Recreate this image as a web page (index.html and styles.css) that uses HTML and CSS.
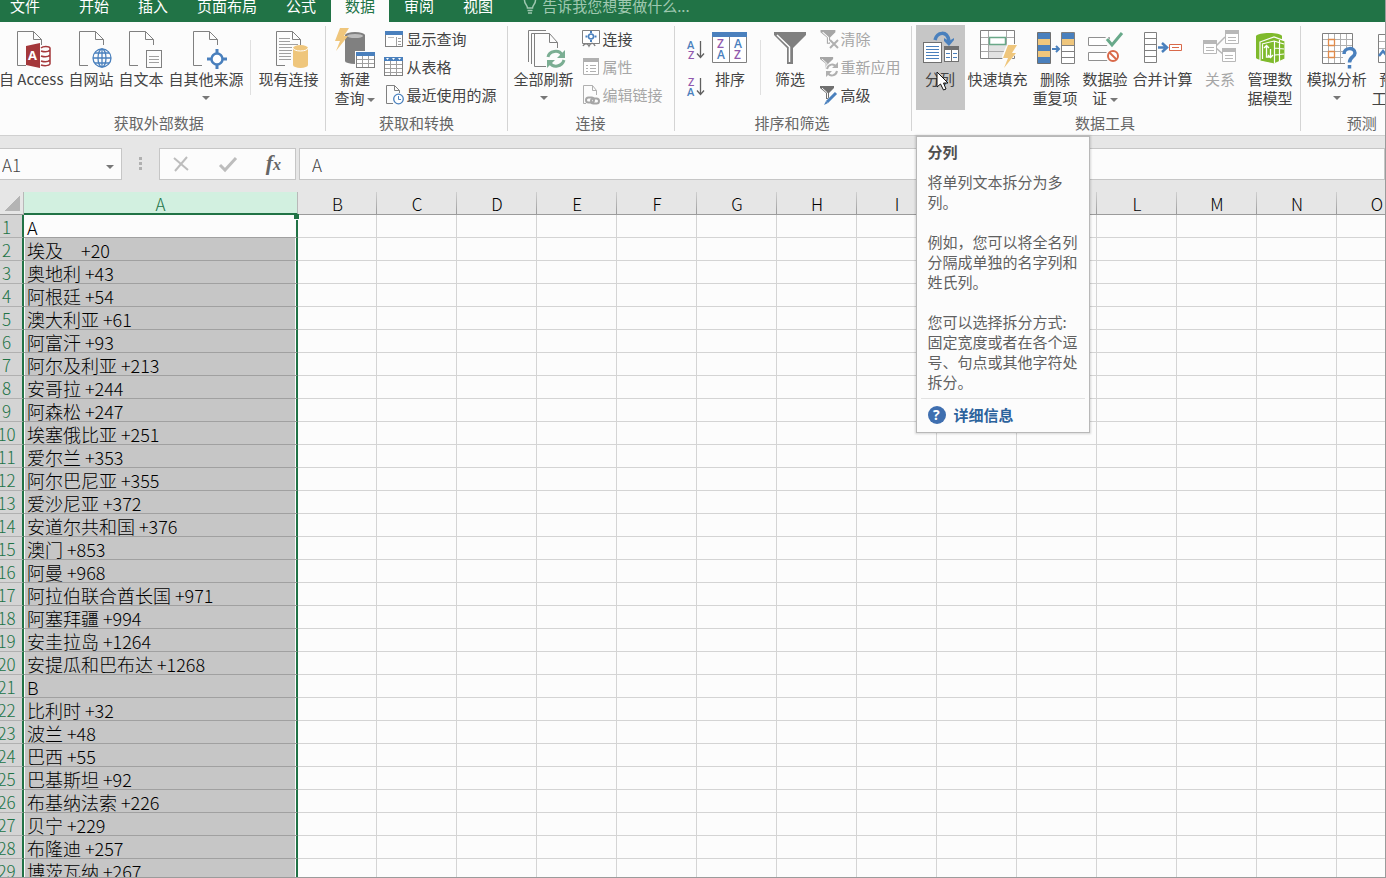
FILE: index.html
```html
<!DOCTYPE html>
<html lang="zh-CN">
<head>
    <meta charset="UTF-8">
    <meta name="viewport" content="width=device-width, initial-scale=1.0">
    <title>Excel - 分列</title>
    <link rel="stylesheet" href="styles.css">
</head>
<body>
    <!-- Shared icon parts -->
    <svg class="defs" aria-hidden="true">
        <symbol id="page" viewBox="0 0 27 36" overflow="visible">
            <path d="M9 34.5H.5V.5H16.5L24.5 8.5V14M16.5 .5V8.5H24.5" fill="none" stroke="#808080"/>
        </symbol>
        <symbol id="bolt" viewBox="0 0 14 23" overflow="visible">
            <path d="M5 0H14L9 8H13L1 23L5 13H0Z" fill="#efc67c"/>
        </symbol>
        <symbol id="funnel" viewBox="0 0 16 16" overflow="visible">
            <path d="M0 0H14V2L9 7V13H6V7L0 2Z" fill="currentColor"/>
            <path d="M2 2L7.5 7V12" fill="none" stroke="#fcfcfc"/>
        </symbol>
    </svg>

    <div class="app">
        <nav class="tabs">
            <button class="tab file">文件</button>
            <button class="tab">开始</button>
            <button class="tab">插入</button>
            <button class="tab">页面布局</button>
            <button class="tab">公式</button>
            <button class="tab active">数据</button>
            <button class="tab">审阅</button>
            <button class="tab">视图</button>
            <label class="tell-me">
                <svg width="14" height="20" viewBox="0 0 14 20" fill="none" stroke="#9fc8b0" stroke-width="1.5"><path d="M4.5 13C4.5 10 1.5 9 1.5 5.500A5.500 5.500 0 0 1 12.500 5.500C12.500 9 9.500 10 9.500 13ZM4.500 15.500H9.500M5 18H9"/></svg>
                <input type="text" placeholder="告诉我您想要做什么...">
            </label>
        </nav>

        <div class="ribbon">
            <section class="group external">
                <div class="tools">
                    <button class="big">
                        <svg width="40" height="41" viewBox="3 0 40 41"><use href="#page" x="9" y="3" width="27" height="36"/>
                            <path d="M18 18L32 15V40L18 37Z" fill="#a4373a"/>
                            <text x="20" y="32" class="glyph" font-size="13" font-weight="700" fill="#fff">A</text>
                            <path d="M33 20C35 18 41 18 42 20V36C41 38 36 38 33 37M33 23C36 24 40 24 42 22M33 28C36 29 40 29 42 27M33 33C36 34 40 34 42 32" fill="none" stroke="#a4373a" stroke-width="1.500"/></svg>
                        <span>自 Access</span>
                    </button>
                    <button class="big">
                        <svg width="40" height="41"><use href="#page" x="8" y="3" width="27" height="36"/>
                            <g fill="#fcfcfc" stroke="#4a80bd" stroke-width="1.300"><circle cx="31" cy="30" r="9"/><ellipse cx="31" cy="30" rx="4" ry="9"/><path d="M31 21V39M22 30H40M24 25H38M24 35H38"/></g></svg>
                        <span>自网站</span>
                    </button>
                    <button class="big">
                        <svg width="40" height="41"><use href="#page" x="8" y="3" width="27" height="36"/>
                            <rect x="25.500" y="22.500" width="15" height="17" fill="#fcfcfc" stroke="#808080"/><path d="M28 28.500H38M28 31.500H38M28 34.500H38" stroke="#a0a0a0"/></svg>
                        <span>自文本</span>
                    </button>
                    <button class="big">
                        <svg width="40" height="41"><use href="#page" x="7" y="3" width="27" height="36"/>
                            <circle cx="31" cy="31" r="9" fill="#fcfcfc"/><circle cx="31" cy="31" r="5.500" fill="#fff" stroke="#4a80bd" stroke-width="2.500"/><path d="M31 21V26M31 36V41M21 31H26M36 31H41" stroke="#4a80bd" stroke-width="3"/></svg>
                        <span>自其他来源</span>
                        <span class="arrow"></span>
                    </button>
                    <i class="divider"></i>
                    <button class="big">
                        <svg width="40" height="41"><use href="#page" x="8" y="3" width="27" height="36"/>
                            <path d="M11 10.500H22M11 13.500H22M11 16.500H30M11 19.500H24M11 22.500H24M11 25.500H23M11 28.500H23M11 31.500H23" stroke="#a0a0a0"/>
                            <path d="M25 20V37A7.500 3 0 0 0 40 37V20A7.500 3 0 0 0 25 20Z" fill="#efc67c"/><path d="M25 20A7.500 3 0 0 0 40 20" fill="none" stroke="#fff"/></svg>
                        <span>现有连接</span>
                    </button>
                </div>
                <h2>获取外部数据</h2>
            </section>
            <i class="separator"></i>

            <section class="group transform">
                <div class="tools">
                    <button class="big">
                        <svg width="40" height="41"><path d="M10 7V33A10 3 0 0 0 30 33V7A10 3 0 0 0 10 7Z" fill="#808080"/><ellipse cx="20" cy="8" rx="8" ry="2" fill="#bdbdbd"/><use href="#bolt" x="0" y="0" width="14" height="23"/>
                            <rect x="20" y="23" width="20" height="18" fill="#fcfcfc"/><rect x="21.500" y="24.500" width="18" height="15" fill="#fff" stroke="#808080"/><path d="M22 31.500H39M22 35.500H39M27.500 28V39M33.500 28V39" stroke="#a0a0a0"/><path d="M21 24H40V28H21Z" fill="#4a80bd"/></svg>
                        <span>新建</span>
                        <span>查询<b class="arrow"></b></span>
                    </button>
                    <div class="stack">
                        <button class="small">
                            <svg width="20" height="20"><rect x="1.500" y="2.500" width="17" height="15" fill="#fff" stroke="#808080"/><path d="M1 2H19V6H1Z" fill="#4a80bd"/><path d="M12.500 8V17M14 9.500H17M14 12.500H17M14 15.500H17" stroke="#a0a0a0"/><path d="M4 8.500H10" stroke="#bbb"/></svg>
                            <span>显示查询</span>
                        </button>
                        <button class="small">
                            <svg width="20" height="20"><rect x=".5" y=".5" width="18" height="18" fill="#fff" stroke="#808080"/><path d="M1 7.500H18M1 11.500H18M1 15.500H18M6.500 4V18M12.500 4V18" stroke="#a0a0a0"/><path d="M0 0H19V4H0Z" fill="#4a80bd"/><path d="M2 1H5L3.500 3ZM8 1H11L9.500 3ZM14 1H17L15.500 3Z" fill="#fff"/></svg>
                            <span>从表格</span>
                        </button>
                        <button class="small">
                            <svg width="20" height="20"><path d="M9 18.500H2.500V.5H10.500L15.500 5.500V8M10.500 .5V5.500H15.500" fill="none" stroke="#808080"/><circle cx="14.500" cy="14" r="4.800" fill="#fff" stroke="#4a80bd" stroke-width="1.300"/><path d="M14.500 11V14.500H17" fill="none" stroke="#4a80bd"/></svg>
                            <span>最近使用的源</span>
                        </button>
                    </div>
                </div>
                <h2>获取和转换</h2>
            </section>
            <i class="separator"></i>

            <section class="group connections">
                <div class="tools">
                    <button class="big">
                        <svg width="40" height="41"><path d="M4.500 34V2.500H22M7.500 36V5.500H22M22 38.500H10.500V5.500H25.500L33.500 14.500V20M25.500 5.500V14.500H33.500" fill="none" stroke="#808080"/>
                            <path d="M24 29C25 23 35 21 38 27M40 32C38 39 29 40 26 35" fill="none" stroke="#7bae93" stroke-width="3"/><path d="M41 22V30H33ZM23 40V32H31Z" fill="#7bae93"/></svg>
                        <span>全部刷新</span>
                        <span class="arrow"></span>
                    </button>
                    <div class="stack">
                        <button class="small">
                            <svg width="20" height="20"><path d="M1.500 1.500H18.500V14.500H1.500Z" fill="#fff" stroke="#808080"/><circle cx="10" cy="7.500" r="2.500" fill="none" stroke="#4a80bd" stroke-width="1.500"/><path d="M10 2V4M10 11V13M4.500 7.500H6.500M13.500 7.500H15.500" stroke="#4a80bd" stroke-width="2"/><path d="M2 17C4 13 7 15 8 17C10 13 13 14 14 17" fill="none" stroke="#808080" stroke-width="1.500"/></svg>
                            <span>连接</span>
                        </button>
                        <button class="small" disabled>
                            <svg width="20" height="20"><path d="M2.500 2.500H17.500V17.500H2.500Z" fill="#fff" stroke="#b0b0b0"/><path d="M2 1H18V5H2Z" fill="#b0b0b0"/><path d="M5 8.500H7M9 8.500H15M5 11.500H7M9 11.500H15M5 14.500H7M9 14.500H15" stroke="#b0b0b0"/></svg>
                            <span>属性</span>
                        </button>
                        <button class="small" disabled>
                            <svg width="20" height="20"><path d="M5 18.500H2.500V.5H11.500L15.500 5.500V10M11.500 .5V5.500H15.500" fill="none" stroke="#b0b0b0"/><g fill="none" stroke="#a6a6a6" stroke-width="2"><rect x="5" y="12.500" width="8" height="5" rx="2.500"/><rect x="10" y="13.500" width="8" height="5" rx="2.500"/></g></svg>
                            <span>编辑链接</span>
                        </button>
                    </div>
                </div>
                <h2>连接</h2>
            </section>
            <i class="separator"></i>

            <section class="group sort-filter">
                <div class="tools">
                    <div class="stack sorts">
                        <button class="small" aria-label="升序">
                            <svg width="18" height="20"><g class="glyph" font-size="11" font-weight="600"><text x="0" y="9" fill="#4a80bd">A</text><text x="1" y="19" fill="#9159ad">Z</text></g><path d="M13.500 1V17M10 13.500L13.500 17.500L17 13.500" fill="none" stroke="#606060" stroke-width="1.300"/></svg>
                        </button>
                        <button class="small" aria-label="降序">
                            <svg width="18" height="20"><g class="glyph" font-size="11" font-weight="600"><text x="1" y="9" fill="#9159ad">Z</text><text x="0" y="19" fill="#4a80bd">A</text></g><path d="M13.500 1V17M10 13.500L13.500 17.500L17 13.500" fill="none" stroke="#606060" stroke-width="1.300"/></svg>
                        </button>
                    </div>
                    <button class="big">
                        <svg width="40" height="41"><path d="M2.500 4.500H36.500V34.500H2.500ZM19.500 8V34" fill="#fff" stroke="#808080"/><path d="M2 4H37V9H2Z" fill="#4a80bd"/>
                            <g class="glyph" font-size="12" font-weight="600"><text x="7" y="20" fill="#9159ad">Z</text><text x="7" y="31" fill="#4a80bd">A</text><text x="24" y="20" fill="#4a80bd">A</text><text x="24" y="31" fill="#9159ad">Z</text></g></svg>
                        <span>排序</span>
                    </button>
                    <i class="divider"></i>
                    <button class="big">
                        <svg width="40" height="41"><path d="M4 4H36V7L23 20V36H17V20L4 7Z" fill="#808080"/><path d="M7 7L19.500 19V34" fill="none" stroke="#fff" stroke-width="1.500"/></svg>
                        <span>筛选</span>
                    </button>
                    <div class="stack">
                        <button class="small" disabled>
                            <svg width="20" height="20"><use href="#funnel" x="1" y="1" width="18" height="17"/><path d="M11 11L19 19M19 11L11 19" stroke="#fcfcfc" stroke-width="4"/><path d="M11 11L19 19M19 11L11 19" stroke="#b0b0b0" stroke-width="2"/></svg>
                            <span>清除</span>
                        </button>
                        <button class="small" disabled>
                            <svg width="20" height="20"><use href="#funnel" x="1" y="0" width="15" height="15"/><circle cx="13" cy="13" r="7" fill="#fcfcfc"/><path d="M8 12C9 7 15 6 17 10M18 14C17 19 11 20 9 16" fill="none" stroke="#b0b0b0" stroke-width="2"/><path d="M19 5V11H13ZM7 20V14H13Z" fill="#b0b0b0"/></svg>
                            <span>重新应用</span>
                        </button>
                        <button class="small">
                            <svg width="20" height="20" color="#707070"><use href="#funnel" x="1" y="1" width="16" height="16"/><path d="M8 18L18 8" stroke="#fcfcfc" stroke-width="5"/><path d="M8 17L17 8" stroke="#4a80bd" stroke-width="3"/><path d="M5 20L7 16L9 18Z" fill="#4a80bd"/></svg>
                            <span>高级</span>
                        </button>
                    </div>
                </div>
                <h2>排序和筛选</h2>
            </section>
            <i class="separator"></i>

            <section class="group data-tools">
                <div class="tools">
                    <div class="tip-host">
                        <button class="big hover" aria-describedby="tip">
                            <svg width="40" height="41"><rect x="3.500" y="14.500" width="18" height="20" fill="#fff" stroke="#707070"/><path d="M6 18.500H19M6 21.500H19M6 24.500H19M6 27.500H19M6 30.500H19" stroke="#4a80bd"/><rect x="24.500" y="18.500" width="14" height="15" fill="#fff" stroke="#707070"/><path d="M24 18H39V22H24Z" fill="#707070"/><path d="M31.500 22V33" stroke="#707070"/><path d="M26 25.500H30M33 25.500H37M26 29.500H30M33 29.500H37" stroke="#4a80bd"/>
                                <path d="M15 12C17 4 27 2 29 13" fill="none" stroke="#4a80bd" stroke-width="3.500"/><path d="M24 10L29 13L34 10V12L29 18L24 13Z" fill="#4a80bd"/></svg>
                            <span>分列</span>
                        </button>
                        <svg class="pointer" width="14" height="20" viewBox="0 0 14 20"><path d="M1 1V16L4.500 13L7.500 19L10 18L7.500 12H12Z" fill="#fff" stroke="#111"/></svg>
                        <div class="tooltip" id="tip" role="tooltip">
                            <h3>分列</h3>
                            <p>将单列文本拆分为多列。</p>
                            <p>例如，您可以将全名列分隔成单独的名字列和姓氏列。</p>
                            <p>您可以选择拆分方式: 固定宽度或者在各个逗号、句点或其他字符处拆分。</p>
                            <div class="more">
                                <svg width="18" height="18"><circle cx="9" cy="9" r="9" fill="#3f6fb0"/><text x="5" y="14" class="glyph" font-size="14" font-weight="700" fill="#fff">?</text></svg>
                                <a href="#">详细信息</a>
                            </div>
                        </div>
                    </div>
                    <button class="big">
                        <svg width="40" height="41"><path d="M2.500 2.500H36.500V30.500H2.500Z" fill="#fff" stroke="#808080"/><path d="M11 17H28V30H11Z" fill="#e2e2e2"/><path d="M3 9.500H36M3 16.500H36M3 23.500H36M10.500 3V30M28.500 3V30" stroke="#a8a8a8"/><path d="M11.500 9.500H27.500V16.500H11.500Z" fill="#fff" stroke="#6aa888" stroke-width="1.500"/><path d="M29 16L24 28L26 40L38 26V16Z" fill="#fcfcfc"/><use href="#bolt" x="25" y="17" width="14" height="23"/></svg>
                        <span>快速填充</span>
                    </button>
                    <button class="big">
                        <svg width="40" height="41"><path d="M2.500 4.500H15.500V35.500H2.500Z" fill="#4a80bd" stroke="#707070"/><path d="M3 11H15V17H3ZM3 23H15V29H3Z" fill="#efc67c"/><path d="M26.500 4.500H39.500V35.500H26.500ZM27 17.500H39M27 23.500H39M27 29.500H39" fill="#fff" stroke="#808080"/><path d="M27 5H39V11H27Z" fill="#4a80bd"/><path d="M27 11H39V17H27Z" fill="#efc67c"/><path d="M17 21H23M21 18L24 21L21 24" fill="none" stroke="#4a80bd" stroke-width="2"/></svg>
                        <span>删除</span>
                        <span>重复项</span>
                    </button>
                    <button class="big">
                        <svg width="40" height="41"><path d="M3.500 9.500H24.500V17.500H3.500ZM3.500 24.500H24.500V32.500H3.500Z" fill="#fff" stroke="#909090"/><path d="M20 10L27 19L39 5" fill="none" stroke="#fcfcfc" stroke-width="6"/><path d="M22 11L27 17L37 5" fill="none" stroke="#68a98a" stroke-width="3"/><circle cx="28" cy="28" r="7.500" fill="#fcfcfc"/><circle cx="28" cy="28" r="5" fill="#fff" stroke="#d9694a" stroke-width="2"/><path d="M24.500 24.500L31.500 31.500" stroke="#d9694a" stroke-width="2"/></svg>
                        <span>数据验</span>
                        <span>证<b class="arrow"></b></span>
                    </button>
                    <button class="big">
                        <svg width="40" height="41"><path d="M1.500 4.500H13.500V34.500H1.500ZM2 10.500H13M2 16.500H13M2 22.500H13M2 28.500H13" fill="#fff" stroke="#808080"/><path d="M15 19.500H22M19 15L24 19.500L19 24" fill="none" stroke="#4a80bd" stroke-width="2.500"/><path d="M26.500 16.500H38.500V22.500H26.500Z" fill="#fff" stroke="#d9694a"/><path d="M29 19.500H36" stroke="#d9694a"/></svg>
                        <span>合并计算</span>
                    </button>
                    <button class="big" disabled>
                        <svg width="40" height="41" fill="#fff" stroke="#b8b8b8"><path d="M16 18L25 9M16 20L24 27" stroke-width="1.500"/><path d="M3.500 12.500H16.500V25.500H3.500ZM25.500 2.500H38.500V15.500H25.500ZM22.500 20.500H35.500V33.500H22.500Z"/><path d="M3 12H17V16H3ZM25 2H39V6H25ZM22 20H36V24H22Z" fill="#b8b8b8" stroke="none"/><path d="M6 19.500H14M6 22.500H14M28 9.500H36M28 12.500H36M25 27.500H33M25 30.500H33"/></svg>
                        <span>关系</span>
                    </button>
                    <button class="big">
                        <svg width="40" height="41"><path d="M6 8C8 4 30 4 32 8V30C28 34 10 34 6 30Z" fill="#7fba2c"/><path d="M10 14L24 9L35 13V31L24 36L10 33Z" fill="#7fba2c" stroke="#fcfcfc" stroke-width="1.200"/><path d="M24.500 13V35M12 16L24 13L34 16M25 20L34 21M25 27L34 26M29.500 12V33M12.500 16V31" fill="none" stroke="#fff" stroke-width="1.200"/><path d="M14 20L16.500 17.500L19 20M16.500 18V29H20.500V21M18 27L20.500 29.500L23 27" fill="none" stroke="#fff" stroke-width="1.300"/></svg>
                        <span>管理数</span>
                        <span>据模型</span>
                    </button>
                </div>
                <h2>数据工具</h2>
            </section>
            <i class="separator"></i>

            <section class="group forecast">
                <div class="tools">
                    <button class="big">
                        <svg width="40" height="41"><path d="M5.500 5.500H35.500V35.500H5.500Z" fill="#fff" stroke="#808080"/><path d="M11.500 6V35M17.500 6V35M23.500 6V35M29.500 6V35M6 11.500H35M6 17.500H35M6 23.500H35M6 29.500H35" stroke="#b0b0b0"/><path d="M11.500 11.500H17.500V17.500H11.500ZM11.500 23.500H17.500V29.500H11.500Z" fill="#fff" stroke="#e08a4a" stroke-width="1.300"/><path d="M26 20H40V41H28V30H26Z" fill="#fcfcfc"/><path d="M27 26C27 19 38 19 38 25C38 29 32.500 29 32.500 34.500M32.500 37V40.500" fill="none" stroke="#4a80bd" stroke-width="3.500"/></svg>
                        <span>模拟分析</span>
                        <span class="arrow"></span>
                    </button>
                    <button class="big">
                        <svg width="40" height="41"><path d="M4.500 6.500H36.500V34.500H4.500Z" fill="#fff" stroke="#808080"/><path d="M5 13.500H36M5 20.500H36" stroke="#b0b0b0"/><path d="M5 28L9 23L13 28L20 20" fill="none" stroke="#4a80bd" stroke-width="2.500"/></svg>
                        <span>预测</span>
                        <span>工作表</span>
                    </button>
                </div>
                <h2>预测</h2>
            </section>
        </div>

        <div class="formula-bar">
            <div class="name-box">
                <input type="text" value="A1" aria-label="名称框">
                <button aria-label="展开"><b class="arrow"></b></button>
            </div>
            <svg class="dots" width="3" height="14" fill="#b0b0b0"><path d="M0 0H3V3H0ZM0 5H3V8H0ZM0 10H3V13H0Z"/></svg>
            <div class="fx-box">
                <button aria-label="取消"><svg width="18" height="18"><path d="M2 3L16 15M15 2L3 16" stroke="#bdbdbd" stroke-width="2"/></svg></button>
                <button aria-label="输入"><svg width="18" height="18"><path d="M1 10L6 15L17 3" fill="none" stroke="#bdbdbd" stroke-width="3"/></svg></button>
                <button class="fx" aria-label="插入函数">f<sub>x</sub></button>
            </div>
            <input class="formula" type="text" value="A" aria-label="编辑栏">
        </div>

        <div class="sheet">
            <table>
                <colgroup><col class="col-num"><col class="col-a"><col class="col-b"><col span="13"></colgroup>
                <thead><tr id="letters"><th class="corner"></th></tr></thead>
                <tbody id="rows"></tbody>
            </table>
        </div>
    </div>

    <script>
        const columns = 'ABCDEFGHIJKLMNO'.split('');
        const values = [
            'A', '埃及\u3000+20', '奥地利 +43', '阿根廷 +54', '澳大利亚 +61', '阿富汗 +93',
            '阿尔及利亚 +213', '安哥拉 +244', '阿森松 +247', '埃塞俄比亚 +251', '爱尔兰 +353',
            '阿尔巴尼亚 +355', '爱沙尼亚 +372', '安道尔共和国 +376', '澳门 +853', '阿曼 +968',
            '阿拉伯联合酋长国 +971', '阿塞拜疆 +994', '安圭拉岛 +1264', '安提瓜和巴布达 +1268',
            'B', '比利时 +32', '波兰 +48', '巴西 +55', '巴基斯坦 +92', '布基纳法索 +226',
            '贝宁 +229', '布隆迪 +257', '博茨瓦纳 +267'
        ];

        // Column letters
        const letters = document.getElementById('letters');
        columns.forEach(letter => {
            const th = document.createElement('th');
            th.textContent = letter;
            letters.appendChild(th);
        });

        // One row for each value, the other columns stay empty
        const rows = document.getElementById('rows');
        values.forEach((value, i) => {
            const tr = document.createElement('tr');
            const th = document.createElement('th');
            th.textContent = i + 1;
            tr.appendChild(th);
            columns.forEach((letter, c) => {
                const td = document.createElement('td');
                if (c === 0) td.textContent = value;
                tr.appendChild(td);
            });
            rows.appendChild(tr);
        });
    </script>
</body>
</html>
```
FILE: styles.css
```css
* {
    box-sizing: border-box;
}

body {
    margin: 0;
    font-family: "Noto Sans CJK SC", "Noto Sans", sans-serif;
    font-size: 15px;
    color: #444;
}

button, input {
    font: inherit;
    color: inherit;
    border: 0;
    padding: 0;
    background: none;
}

svg {
    flex: none;
    overflow: visible;
}

.defs {
    position: absolute;
    width: 0;
    height: 0;
}

.glyph {
    font-family: "Open Sans", sans-serif;
}

.app {
    display: flex;
    flex-direction: column;
    height: 100vh;
    overflow: hidden;
    background: #fcfcfc;
    border-right: 1px solid #9b9b9b;
    border-bottom: 1px solid #9b9b9b;
}

/* Tabs */
.tabs {
    display: flex;
    align-items: flex-end;
    flex: none;
    gap: 1px;
    height: 22px;
    background: #217346;
    overflow: hidden;
}

.tab {
    flex: none;
    height: 34px;
    padding: 0 14px;
    color: #fff;
}

.tab.file {
    padding: 0 24px 0 10px;
}

.tab.active {
    background: #fcfcfc;
    color: #217346;
}

.tell-me {
    display: flex;
    align-items: center;
    flex: 1;
    gap: 5px;
    height: 34px;
    padding-left: 15px;
}

.tell-me input {
    flex: 1;
}

.tell-me input::placeholder {
    color: #9fc8b0;
}

/* Ribbon */
.ribbon {
    display: flex;
    flex: none;
    margin-left: -10px;
    border-bottom: 1px solid #d0d0d0;
}

.group {
    flex: none;
    padding: 3px 4px 0;
}

.group h2 {
    margin: 0;
    font-size: 15px;
    font-weight: 400;
    line-height: 25px;
    text-align: center;
    color: #666;
}

.tools {
    display: flex;
    gap: 1px;
    height: 85px;
}

.separator {
    flex: none;
    width: 1px;
    height: 105px;
    margin-top: 4px;
    background: #d4d4d4;
}

.divider {
    width: 1px;
    height: 55px;
    margin: 15px 4px 0;
    background: #e0e0e0;
}

.big {
    display: flex;
    flex-direction: column;
    align-items: center;
    min-width: 49px;
    height: 85px;
    padding: 3px 2px 0;
    line-height: 19px;
    white-space: nowrap;
}

.big.hover {
    background: #c6c6c6;
}

.arrow {
    display: inline-block;
    border: 4px solid transparent;
    border-top-color: #777;
    border-bottom: 0;
    vertical-align: middle;
}

.big > .arrow {
    margin-top: 8px;
}

.big b.arrow {
    margin-left: 3px;
}

.stack {
    display: flex;
    flex-direction: column;
    align-items: flex-start;
}

.small {
    display: flex;
    align-items: center;
    gap: 2px;
    height: 28px;
    white-space: nowrap;
}

.small span {
    padding-bottom: 2px;
}

button:disabled {
    color: #a6a6a6;
}

.sorts {
    padding-top: 6px;
}

.sorts .small {
    height: 37px;
}

.external {
    padding: 3px 5px 0 7px;
}

.transform .stack {
    padding: 0 6px 0 4px;
}

.connections .stack {
    padding: 0 7px 0 4px;
}

.sort-filter {
    padding: 3px 10px 0 9px;
}

.sort-filter .stack {
    padding-left: 3px;
}

.data-tools {
    padding-right: 5px;
}

/* Tooltip of the hovered button */
.tip-host {
    position: relative;
}

.pointer {
    position: absolute;
    left: 20px;
    top: 46px;
    z-index: 3;
}

.tooltip {
    position: absolute;
    left: 0;
    top: 111px;
    z-index: 2;
    width: 174px;
    padding: 5px 4px 7px;
    background: #fcfcfc;
    border: 1px solid #b8b8b8;
    box-shadow: 0 0 2px 1px rgba(0, 0, 0, 0.15);
    line-height: 20px;
    color: #606060;
}

.tooltip h3 {
    margin: 0 7px 10px;
    font-size: 15px;
    color: #505050;
}

.tooltip p {
    margin: 0 5px 20px 7px;
}

.tooltip .more {
    display: flex;
    align-items: center;
    gap: 8px;
    margin-top: -14px;
    padding: 6px 7px 0;
    border-top: 1px solid #e2e2e2;
}

.more a {
    font-weight: 700;
    color: #2c639c;
    text-decoration: none;
}

/* Formula bar */
.formula-bar {
    display: flex;
    flex: none;
    align-items: center;
    height: 56px;
    background: #e6e6e6;
    font-size: 17px;
}

.name-box, .fx-box, .formula {
    display: flex;
    align-items: center;
    height: 32px;
    background: #fcfcfc;
    border: 1px solid #c6c6c6;
}

.name-box {
    width: 122px;
    border-left: 0;
    padding: 0 7px 0 2px;
}

.name-box input {
    flex: 1;
    min-width: 0;
    font-weight: 300;
}

.dots {
    margin: 0 17px;
}

.fx-box {
    justify-content: space-between;
    width: 137px;
    padding: 0 14px 0 12px;
}

.fx-box svg {
    display: block;
}

.fx {
    font-family: "Liberation Serif", serif;
    font-size: 22px;
    font-style: italic;
    font-weight: 700;
    line-height: 24px;
    color: #666;
}

.fx sub {
    font-size: 16px;
    vertical-align: baseline;
}

.formula {
    flex: 1;
    margin-left: 3px;
    padding: 0 12px;
    font-weight: 300;
}

/* Sheet */
.sheet {
    flex: 1;
    min-height: 0;
    margin-left: -9px;
    overflow: hidden;
}

table {
    table-layout: fixed;
    width: 1426px;
    border-collapse: separate;
    border-spacing: 0;
    font-size: 17px;
    color: #000;
}

col {
    width: 80px;
}

.col-num {
    width: 33px;
}

.col-a {
    width: 274px;
}

.col-b {
    width: 79px;
}

th, td {
    height: 23px;
    padding: 2px 0 0;
    line-height: 20px;
    font-weight: 300;
    white-space: nowrap;
    border-right: 1px solid #d4d4d4;
    border-bottom: 1px solid #d4d4d4;
}

thead th {
    background: linear-gradient(#d0d0d0, #9b9b9b) right / 1px 100% no-repeat #e6e6e6;
    border-right: 0;
    border-bottom-color: #9b9b9b;
}

thead .corner {
    background: linear-gradient(135deg, transparent 50%, #b4b4b4 50%) 14px 4px / 15px 15px no-repeat #e6e6e6;
    border-right: 1px solid #b8b8b8;
}

thead th:nth-child(2) {
    line-height: 19px;
    background: #d2f0e0;
    color: #217346;
    border-right: 1px solid #b8b8b8;
    border-bottom: 2px solid #217346;
}

tbody th {
    background: #d4d4d4;
    color: #217346;
    border-right: 2px solid #217346;
    border-bottom-color: #b0b0b0;
}

tbody td:nth-child(2) {
    position: relative;
    padding-left: 3px;
    font-size: 18px;
    background: #c6c6c6;
    box-shadow: inset 1px 0 #fcfcfc, inset -1px 0 #fcfcfc;
    border-right: 2px solid #217346;
    border-bottom-color: #a0a0a0;
}

tbody tr:first-child td:nth-child(2) {
    background: #fcfcfc;
}

/* Fill handle */
tbody tr:first-child td:nth-child(2)::after {
    content: "";
    position: absolute;
    right: -3px;
    top: -1px;
    width: 5px;
    height: 5px;
    background: #217346;
    border-bottom: 1px solid #fcfcfc;
}
```
